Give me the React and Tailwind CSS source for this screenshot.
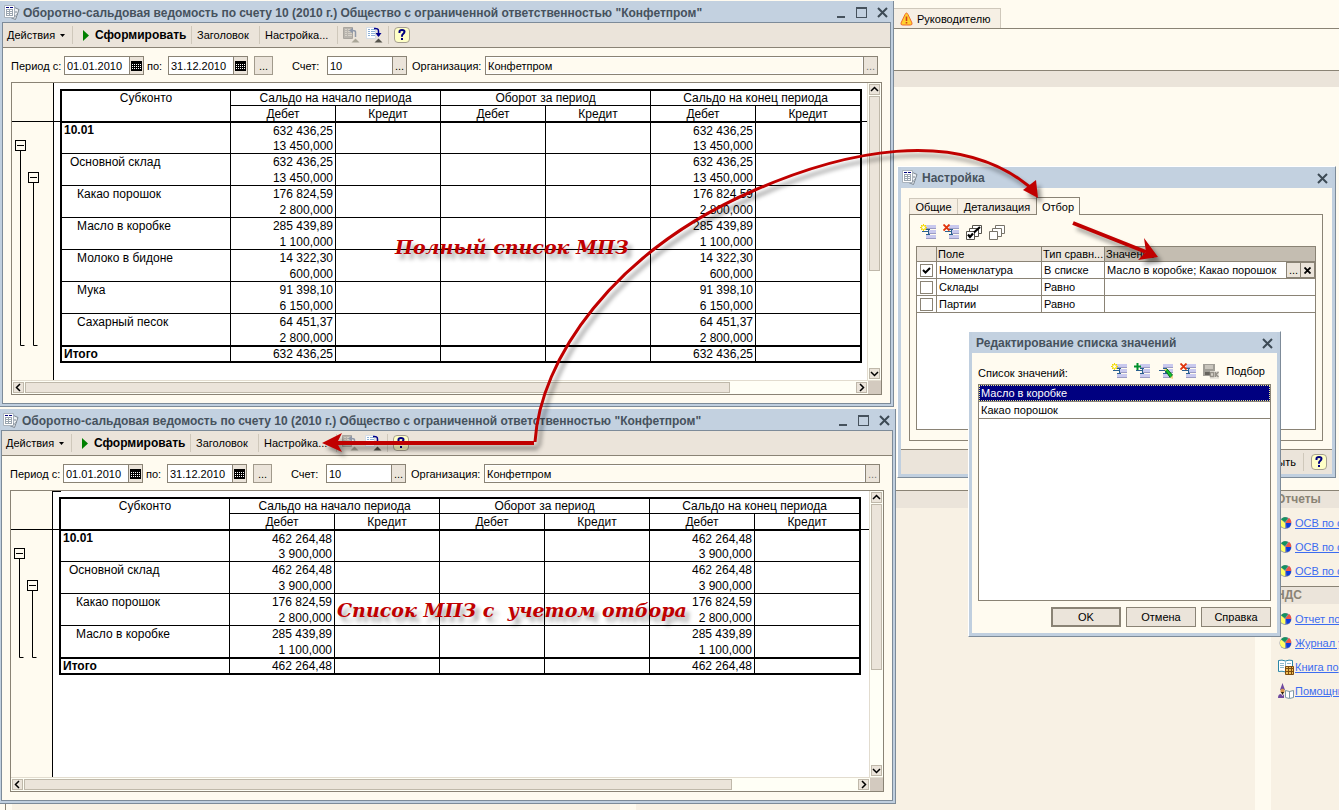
import { useId } from 'react';

const TITLE = 'Оборотно-сальдовая ведомость по счету 10 (2010 г.) Общество с ограниченной ответственностью "Конфетпром"';

const fullReport = {
  rows: [
    { name: '10.01', level: 0, sum: '632 436,25', qty: '13 450,000' },
    { name: 'Основной склад', level: 1, sum: '632 436,25', qty: '13 450,000' },
    { name: 'Какао порошок', level: 2, sum: '176 824,59', qty: '2 800,000' },
    { name: 'Масло в коробке', level: 2, sum: '285 439,89', qty: '1 100,000' },
    { name: 'Молоко в бидоне', level: 2, sum: '14 322,30', qty: '600,000' },
    { name: 'Мука', level: 2, sum: '91 398,10', qty: '6 150,000' },
    { name: 'Сахарный песок', level: 2, sum: '64 451,37', qty: '2 800,000' },
  ],
  total: '632 436,25',
  thumbV: 175,
  thumbH: 705,
};

const filteredReport = {
  rows: [
    { name: '10.01', level: 0, sum: '462 264,48', qty: '3 900,000' },
    { name: 'Основной склад', level: 1, sum: '462 264,48', qty: '3 900,000' },
    { name: 'Какао порошок', level: 2, sum: '176 824,59', qty: '2 800,000' },
    { name: 'Масло в коробке', level: 2, sum: '285 439,89', qty: '1 100,000' },
  ],
  total: '462 264,48',
  thumbV: 166,
  thumbH: 708,
  cellCursor: true,
};

const filters = [
  { field: 'Номенклатура', type: 'В списке', value: 'Масло в коробке; Какао порошок', on: true },
  { field: 'Склады', type: 'Равно', value: '', on: false },
  { field: 'Партии', type: 'Равно', value: '', on: false },
];

const linkGroups = [
  {
    title: 'Отчеты',
    links: [
      { text: 'ОСВ по с', icon: 'pie' },
      { text: 'ОСВ по с', icon: 'pie' },
      { text: 'ОСВ по с', icon: 'pie' },
    ],
  },
  {
    title: 'НДС',
    links: [
      { text: 'Отчет по', icon: 'pie' },
      { text: 'Журнал у', icon: 'pie' },
      { text: 'Книга по', icon: 'book' },
      { text: 'Помощни', icon: 'wizard' },
    ],
  },
];

const indent = ['pl-[2px]', 'pl-[8px]', 'pl-[15px]'];

/* ---------- icons ---------- */

function PagesIcon() {
  return (
    <svg width="16" height="16" viewBox="0 0 16 16" className="shrink-0">
      <path d="M10.500 2.500l4.500 2-3.500 10-5-2z" fill="#eef1f4" stroke="#7d8791" />
      <path d="M0.500 0.500h10v12h-10z" fill="#fff" stroke="#a9b3bd" />
      <path d="M2 2.500h3M6 2.500h3" stroke="#00007c" />
      <path d="M2 4.500h7M2 6.500h7M2 8.500h7M2 10.500h7M2.500 4v7M5.500 4v7M8.500 4v7" stroke="#9ba6b0" />
      <path d="M12 6v2M13 9v1M11 10v2" stroke="#7d8791" />
    </svg>
  );
}

function HelpIcon() {
  return (
    <svg width="16" height="16" viewBox="0 0 16 16">
      <rect x="0.500" y="0.500" width="15" height="15" rx="3.500" fill="#ffffc6" stroke="#a59e90" />
      <path d="M5.500 6V4.500q0-1.500 2.500-1.500t2.500 1.800q0 1.200-1.300 2T8 9.200v.6" fill="none" stroke="#000080" strokeWidth="2" />
      <rect x="7" y="11" width="2" height="2" fill="#000080" />
    </svg>
  );
}

function SheetArrowIcon({ up }) {
  return (
    <svg width="17" height="16" viewBox="0 0 17 16">
      <path d="M0.500 0.500h9v11h-9z" fill={up ? '#b9b5ae' : '#fff'} stroke={up ? '#aaa69f' : '#d5dde6'} />
      <path d="M2 2.500h2M2 4.500h2M2 6.500h2M2 8.500h2M5 2.500h4M5 4.500h4M5 6.500h4M5 8.500h4" stroke={up ? '#d6d1c8' : '#8eb1d6'} />
      {up ? (
        <>
          <path d="M12.500 10V5q0-1.500-3-1.500" fill="none" stroke="#8f98a8" strokeWidth="1.500" />
          <path d="M10 0.500v6L6 3.500z" fill="#8f98a8" />
        </>
      ) : (
        <>
          <path d="M8 1.500q4.500-.5 4.500 2.500v5" fill="none" stroke="#00008c" strokeWidth="1.500" />
          <path d="M9.500 6h6l-3 4z" fill="#00008c" />
        </>
      )}
      <path d="M12.500 11.500l4 4h-8z" fill={up ? '#aaa697' : '#55534b'} />
    </svg>
  );
}

function CalendarIcon() {
  return (
    <svg width="11" height="10" viewBox="0 0 11 10">
      <path d="M0 0h11v10H0z" fill="#000" />
      <path d="M1.500 3v6M3.500 3v6M5.500 3v6M7.500 3v6M9.500 3v6" stroke="#fff" strokeDasharray="1 1" />
    </svg>
  );
}

function RowsIcon({ kind }) {
  return (
    <svg width="16" height="16" viewBox="0 0 16 16">
      <path d="M6 1h10v4H6zM9 6h7v4H9zM6 11h10v4H6z" fill="#c9c9ee" />
      <path d="M6 4.500h10M9 9.500h7M6 14.500h10" stroke="#9c9cc4" />
      <path d="M2 7.500h7M8.500 5v5M6 5.500h4M6 10.500h4" stroke="#2a6090" />
      {kind === 'new' && (
        <>
          <circle cx="3.500" cy="3.500" r="2" fill="#fffbe0" stroke="#f2d800" />
          <path d="M3.500 0v1.500M3.500 5.500V7M0 3.500h1.500M5.500 3.500H7M1 1l1 1M6 1L5 2M1 6l1-1M6 6L5 5" stroke="#f2d800" />
        </>
      )}
      {kind === 'add' && <path d="M0 3.500h7M3.500 0v7" stroke="#00902c" strokeWidth="2" />}
      {kind === 'delete' && <path d="M0.500 0.500l6 6M6.500 0.500l-6 6" stroke="#e0330c" strokeWidth="1.800" />}
      {kind === 'edit' && (
        <>
          <path d="M8 7l2-1 5.500 6-2 3z" fill="#12c22e" stroke="#066a14" />
          <path d="M13 15l3-3v4z" fill="#f3d58b" />
          <path d="M7 6l1.500 2L10 6z" fill="#f5e070" />
        </>
      )}
    </svg>
  );
}

function StackIcon({ checked }) {
  return (
    <svg width="16" height="16" viewBox="0 0 16 16">
      <g fill="#fff" stroke={checked ? '#55524b' : '#77736a'}>
        <path d="M6.500 1.500h9v8h-9z" />
        <path d="M3.500 4.500h9v8h-9z" />
        <path d="M0.500 7.500h8v8h-8z" />
      </g>
      {checked && <path d="M2 10.500l2 2.500 3-3.500M8 8.500L14 3" fill="none" stroke="#000" strokeWidth="2.200" />}
    </svg>
  );
}

function SaveOkIcon() {
  return (
    <svg width="16" height="16" viewBox="0 0 16 16">
      <path d="M0 1h12v12H0z" fill="#a19e97" />
      <path d="M2 2h8v4H2z" fill="#c9c5bd" />
      <path d="M2 9h5v3H2z" fill="#66635d" />
      <path d="M7 8h9v8H7z" fill="#e9e5dc" />
      <path d="M7.500 9.500h3v4h-3zM12.500 9v5M15.500 9l-2.500 2.500 2.500 2.500" fill="none" stroke="#96928a" strokeWidth="1.500" />
    </svg>
  );
}

function WarningIcon() {
  return (
    <svg width="13" height="14" viewBox="0 0 13 14">
      <path d="M6.500 1Q7.300 1 8 2.500l4 8.500q.5 2-1.500 2h-8Q.5 13 1 11l4-8.500Q5.700 1 6.500 1z" fill="#ffd02e" stroke="#f0692b" />
      <path d="M5.700 4.500h1.600V9H5.700zM5.700 10h1.600v1.500H5.700z" fill="#d0401c" />
    </svg>
  );
}

function LinkIcon({ name }) {
  if (name === 'book') {
    return (
      <svg width="16" height="16" viewBox="0 0 16 16" className="shrink-0">
        <path d="M0.500 1.500q3.500-1 7 .5 3.500-1.500 7-.5v11q-3.500-.8-7 .5-3.500-1.300-7-.5z" fill="#fff" stroke="#2b87a8" />
        <path d="M7.500 2v11M2 4.500h4M2 6.500h4M2 8.500h4M9 4.500h4" stroke="#8fb9cc" />
        <path d="M7.500 7.500h8v8h-8z" fill="#f0bf55" stroke="#7c4b10" />
        <path d="M8 9.500h7M8 12.500h7M10.500 8v7M13.500 8v7" stroke="#7c4b10" />
      </svg>
    );
  }
  if (name === 'wizard') {
    return (
      <svg width="16" height="16" viewBox="0 0 16 16" className="shrink-0">
        <path d="M4.500 0L7 7H2z" fill="#6f4aa0" />
        <circle cx="4.500" cy="8" r="2.200" fill="#d99a4b" />
        <path d="M3 9h3l-1.500 3z" fill="#2b1c10" />
        <path d="M0 15q0-4 3-4l1.500 2 1.500-2v4z" fill="#6f4aa0" />
        <path d="M7.500 7.500l4 1 4-1v7l-4 1-4-1zM11.500 8v7" fill="#fff" stroke="#7d97a5" />
      </svg>
    );
  }
  return (
    <svg width="16" height="14" viewBox="0 0 16 14" className="shrink-0">
      <circle cx="7.500" cy="7" r="6" fill="#8c93a8" />
      <path d="M7 6L3 3.500A5.200 5.200 0 0 1 10 2z" fill="#14925e" />
      <path d="M8 6l3-4a5 5 0 0 1 2 5H8z" fill="#f05545" />
      <path d="M8 7h5a5 5 0 0 1-4.500 5z" fill="#0a3be0" />
      <path d="M7 7L3 3.500A5.200 5.200 0 0 0 7 12z" fill="#ffff66" />
    </svg>
  );
}

function CrossIcon() {
  return (
    <svg width="11" height="11" viewBox="0 0 11 11">
      <path d="M1 1l9 9M10 1l-9 9" stroke="#3d4a55" strokeWidth="2" />
    </svg>
  );
}

/* ---------- report window ---------- */

function Separator() {
  return <span className="h-[18px] w-px shrink-0 bg-[#cfc8bb]" />;
}

function PickField({ label, labelClass, value, fieldClass, children, muted }) {
  const id = useId();
  return (
    <>
      <label htmlFor={id} className={`shrink-0 whitespace-nowrap ${labelClass}`}>{label}</label>
      <div className={`flex h-[19px] border border-[#8a8375] ${fieldClass}`}>
        <input
          id={id}
          defaultValue={value}
          className={`min-w-0 flex-1 outline-none ${muted ? 'border border-white bg-[#fffbf0] px-px' : 'bg-white px-[2px]'}`}
        />
        <button
          type="button"
          aria-label="Выбрать"
          className={`flex w-[14px] shrink-0 items-center justify-center border-l border-[#8a8375] bg-[#ebe4da] ${muted ? 'text-[#777]' : ''}`}
        >
          {children}
        </button>
      </div>
    </>
  );
}

function ScrollButton({ d, label }) {
  return (
    <button aria-label={label} className="flex size-[11px] shrink-0 items-center justify-center border border-[#bfb8aa] bg-[#ebe4da]">
      <svg width="9" height="9" viewBox="0 0 9 9" className="shrink-0">
        <path d={d} fill="none" stroke="#000" strokeWidth="1.500" />
      </svg>
    </button>
  );
}

function Outline({ count }) {
  const end = 39 + count * 32;
  return (
    <svg width="41" height={end + 2} viewBox={`0 0 41 ${end + 2}`} fill="none" stroke="#000" className="-mt-[39px]">
      <path d={`M8.500 67v${end - 67 - 0.5}h4M21.500 99v${end - 99 - 0.5}h4`} />
      <rect x="3.500" y="57.500" width="10" height="10" fill="#fffbf0" />
      <rect x="16.500" y="89.500" width="10" height="10" fill="#fffbf0" />
      <path d="M5 62.500h7M18 94.500h7" />
    </svg>
  );
}

function ReportTable({ report }) {
  const last = report.rows.length - 1;
  return (
    <table className="relative w-[802px] table-fixed border-separate border-spacing-0 border-2 border-black bg-white text-[12px] leading-[14px]">
      <colgroup>
        <col className="w-[169px]" />
        <col className="w-[105px]" />
        <col className="w-[105px]" />
        <col className="w-[105px]" />
        <col className="w-[105px]" />
        <col className="w-[105px]" />
        <col className="w-[104px]" />
      </colgroup>
      <thead>
        <tr className="h-[15px] *:p-0 *:font-normal">
          <th rowSpan={2} className="border-r border-b-2 border-black align-top">Субконто</th>
          <th colSpan={2} className="border-r border-b border-black">Сальдо на начало периода</th>
          <th colSpan={2} className="border-r border-b border-black">Оборот за период</th>
          <th colSpan={2} className="border-b border-black">Сальдо на конец периода</th>
        </tr>
        <tr className="h-[17px] *:border-r *:border-b-2 *:border-black *:p-0 *:font-normal">
          <th>Дебет</th>
          <th>Кредит</th>
          <th>Дебет</th>
          <th>Кредит</th>
          <th>Дебет</th>
          <th className="border-r-0!">Кредит</th>
        </tr>
      </thead>
      {report.rows.map((row, i) => {
        const line = i === last ? 'border-b-2' : 'border-b';
        return (
          <tbody key={row.name}>
            <tr className={`${i === 0 ? 'h-[15px]' : 'h-4'} *:border-r *:border-black *:pb-0`}>
              <td
                rowSpan={2}
                className={`align-top ${line} ${indent[row.level]} ${row.level === 0 ? 'pt-0 font-bold' : 'pt-px'}`}
              >
                {row.name}
              </td>
              <td className="pt-0 pr-[2px] text-right">{row.sum}</td>
              <td />
              <td />
              <td />
              <td className="pt-0 pr-[2px] text-right">{row.sum}</td>
              <td className="border-r-0!" />
            </tr>
            <tr className={`${i === last ? 'h-[17px] *:border-b-2' : 'h-4 *:border-b'} *:border-r *:border-black *:py-0`}>
              <td className="pr-[2px] text-right">{row.qty}</td>
              <td />
              <td />
              <td />
              <td className="pr-[2px] text-right">{row.qty}</td>
              <td className="border-r-0!" />
            </tr>
          </tbody>
        );
      })}
      <tfoot>
        <tr className="h-[14px] *:border-r *:border-black *:py-0">
          <td className="pl-[2px] font-bold">Итого</td>
          <td className="pr-[2px] text-right">{report.total}</td>
          <td />
          <td />
          <td />
          <td className="pr-[2px] text-right">{report.total}</td>
          <td className="border-r-0!" />
        </tr>
      </tfoot>
    </table>
  );
}

function ReportWindow({ report, className }) {
  return (
    <section className={`absolute flex flex-col border-r border-b border-[#7d8b99] bg-[#c0cfdf] pr-[2px] pb-[2px] pl-[2px] ${className}`}>
      <header className="flex h-[21px] shrink-0 items-center bg-[#c3d1e0] pt-[2px] pr-[3px] pl-[2px]">
        <PagesIcon />
        <h2 className="ml-[3px] flex-1 whitespace-nowrap text-[12px] font-bold text-[#46525d]">{TITLE}</h2>
        <div className="flex items-center gap-[10px]">
          <button aria-label="Свернуть" className="flex h-[11px] w-[9px] items-end">
            <span className="h-[2px] w-2 bg-[#46525d]" />
          </button>
          <button aria-label="Развернуть" className="h-[11px] w-[11px] border border-t-2 border-[#46525d]" />
          <button aria-label="Закрыть"><CrossIcon /></button>
        </div>
      </header>

      <div className="flex min-h-0 flex-1 flex-col border border-[#7d8b99] bg-[#fffbf0]">
        {/* Toolbar */}
        <div className="flex h-[25px] shrink-0 items-center border-b border-[#8a8375] bg-[#ebe4da] whitespace-nowrap">
          <button className="flex w-[69px] items-center gap-[5px] pl-1">
            Действия
            <svg width="5" height="3" viewBox="0 0 5 3"><path d="M0 0h5L2.500 3z" /></svg>
          </button>
          <Separator />
          <button className="flex w-[118px] items-center gap-[6px] pl-[10px] text-[12px] font-bold">
            <svg width="6" height="11" viewBox="0 0 6 11"><path d="M0 0l6 5.500L0 11z" fill="#008000" /></svg>
            Сформировать
          </button>
          <Separator />
          <button className="w-[67px] pl-[5px] text-left">Заголовок</button>
          <Separator />
          <button className="w-[77px] pl-[5px] text-left">Настройка...</button>
          <Separator />
          <button aria-label="Свернуть группы" className="ml-[5px] w-[23px]"><SheetArrowIcon up /></button>
          <button aria-label="Развернуть группы" className="w-[22px]"><SheetArrowIcon /></button>
          <Separator />
          <button aria-label="Справка" className="ml-[5px]"><HelpIcon /></button>
        </div>

        {/* Report parameters */}
        <form className="flex h-[34px] shrink-0 items-center pt-px pr-[12px] pl-2">
          <PickField label="Период с:" labelClass="w-[53px]" value="01.01.2010" fieldClass="w-[80px] shrink-0">
            <CalendarIcon />
          </PickField>
          <PickField label="по:" labelClass="w-[24px] pl-[3px]" value="31.12.2010" fieldClass="w-[80px] shrink-0">
            <CalendarIcon />
          </PickField>
          <button type="button" className="ml-[6px] h-[19px] w-[19px] shrink-0 border border-[#a19a8c] bg-[#ebe4da] leading-[12px]">...</button>
          <PickField label="Счет:" labelClass="ml-[19px] w-[35px]" value="10" fieldClass="w-[80px] shrink-0">...</PickField>
          <PickField label="Организация:" labelClass="w-[78px] pl-[5px]" value="Конфетпром" fieldClass="flex-1" muted>...</PickField>
        </form>

        {/* Sheet */}
        <div className="mr-[8px] mb-[8px] ml-2 flex min-h-0 flex-1 flex-col border border-[#8a8375] bg-white">
          <div className="flex min-h-0 flex-1">
            <div className="w-[42px] shrink-0 overflow-hidden border-r border-black bg-[#fffbf0]">
              <div className="h-[39px] border-b border-black" />
              <Outline count={report.rows.length} />
            </div>
            <div className="relative min-w-0 flex-1 overflow-hidden pt-[6px] pl-[6px]">
              <div className="absolute inset-x-0 top-0 h-[39px] border-b border-black" />
              {report.cellCursor && <div className="absolute top-0 left-0 h-px w-[8px] bg-black" />}
              <ReportTable report={report} />
            </div>
            <div className="flex w-[14px] shrink-0 flex-col items-center gap-px border-l border-[#e2dccf] bg-[#fffff6] py-px">
              <ScrollButton label="Вверх" d="M1 6l3.500-3.500L8 6" />
              <div className="w-[11px] border border-[#bfb8aa] bg-[#ebe4da]" style={{ height: report.thumbV }} />
              <div className="flex-1" />
              <ScrollButton label="Вниз" d="M1 3l3.500 3.500L8 3" />
            </div>
          </div>
          <div className="flex h-[14px] shrink-0 border-t border-[#e2dccf] bg-[#fffff6]">
            <div className="flex flex-1 items-center gap-px px-px">
              <ScrollButton label="Влево" d="M6 1L2.500 4.500 6 8" />
              <div className="h-[11px] border border-[#bfb8aa] bg-[#ebe4da]" style={{ width: report.thumbH }} />
              <div className="flex-1" />
              <ScrollButton label="Вправо" d="M3 1l3.500 3.500L3 8" />
            </div>
            <div className="w-[13px] bg-[#d3cabf]" />
          </div>
        </div>
      </div>
    </section>
  );
}

/* ---------- dialogs ---------- */

function Dialog({ title, icon, className, children }) {
  return (
    <section className={`absolute flex flex-col border-t border-l border-r border-b border-t-white border-l-white border-r-[#7d8b99] border-b-[#7d8b99] bg-[#c0cfdf] px-[3px] pb-[3px] ${className}`}>
      <header className="flex h-[21px] shrink-0 items-center gap-[4px] bg-[#c3d1e0] pt-px pr-[4px] pl-[1px]">
        {icon}
        <h2 className={`flex-1 text-[12px] font-bold text-[#46525d] ${icon ? '' : 'pl-[3px]'}`}>{title}</h2>
        <button aria-label="Закрыть"><CrossIcon /></button>
      </header>
      <div className="flex min-h-0 flex-1 flex-col bg-[#fffbf0]">{children}</div>
    </section>
  );
}

function SettingsDialog() {
  return (
    <Dialog title="Настройка" icon={<PagesIcon />} className="top-[166px] left-[897px] h-[312px] w-[439px]">
      <div className="mt-[9px] ml-2 flex h-[17px] items-end">
        <button className="h-4 w-[48px] border-t border-l border-[#cfc8bb] bg-[#f6efe4]">Общие</button>
        <button className="h-4 w-[79px] border-t border-l border-[#cfc8bb] bg-[#f6efe4]">Детализация</button>
        <button className="relative -mb-px h-[18px] w-[44px] border border-b-0 border-[#8a8375] bg-[#fffbf0]">Отбор</button>
      </div>
      <div className="mr-[9px] ml-2 flex min-h-0 flex-1 flex-col border border-[#8a8375] px-[6px] pb-[10px]">
        <div className="flex h-[31px] shrink-0 items-center gap-[7px] pt-[3px] pl-[4px]">
          <button aria-label="Добавить"><RowsIcon kind="new" /></button>
          <button aria-label="Удалить"><RowsIcon kind="delete" /></button>
          <button aria-label="Включить все"><StackIcon checked /></button>
          <button aria-label="Выключить все"><StackIcon /></button>
        </div>
        <div className="flex-1 border border-[#8a8375] bg-white">
          <table className="w-full table-fixed border-separate border-spacing-0 text-left leading-[14px]">
            <thead>
              <tr className="h-[15px] *:border-r *:border-b *:border-[#8a8375] *:bg-[#ebe4da] *:py-0 *:pl-[1px] *:font-normal">
                <th className="w-5" />
                <th className="w-[105px]">Поле</th>
                <th className="w-[63px] overflow-hidden pr-0 whitespace-nowrap">Тип сравн...</th>
                <th className="border-r-0! bg-[#c4bdb1]!">Значение</th>
              </tr>
            </thead>
            <tbody>
              {filters.map((f) => (
                <tr key={f.field} className="h-[17px] *:border-r *:border-b *:border-[#8a8375] *:p-0">
                  <td>
                    <span className="relative mx-auto block size-[13px]">
                      <input
                        type="checkbox"
                        defaultChecked={f.on}
                        aria-label={f.field}
                        className="peer block size-[13px] appearance-none border border-[#8a8375] bg-white"
                      />
                      <svg viewBox="0 0 13 13" className="pointer-events-none absolute inset-0 hidden peer-checked:block">
                        <path d="M3 6l2.500 2.500L10 4" fill="none" stroke="#000" strokeWidth="2" />
                      </svg>
                    </span>
                  </td>
                  <td><span className="pl-[2px]">{f.field}</span></td>
                  <td><span className="pl-[2px]">{f.type}</span></td>
                  <td className="border-r-0!">
                    {f.on && (
                      <div className="flex h-4 items-center">
                        <span className="flex-1 pl-[2px] whitespace-nowrap">{f.value}</span>
                        <button aria-label="Выбрать" className="h-4 w-[15px] border border-[#8a8375] bg-[#ebe4da] leading-[10px]">...</button>
                        <button aria-label="Очистить" className="flex h-4 w-[14px] items-center justify-center border border-l-0 border-[#8a8375] bg-[#ebe4da]">
                          <svg width="7" height="7" viewBox="0 0 7 7"><path d="M0.500 0.500l6 6M6.500 0.500l-6 6" stroke="#000" strokeWidth="1.800" /></svg>
                        </button>
                      </div>
                    )}
                  </td>
                </tr>
              ))}
            </tbody>
          </table>
        </div>
      </div>
      <footer className="mt-2 flex h-[25px] shrink-0 items-center justify-end gap-[7px] border-t border-[#8a8375] bg-[#ebe4da] pr-[5px]">
        <button>Закрыть</button>
        <Separator />
        <button aria-label="Справка"><HelpIcon /></button>
      </footer>
    </Dialog>
  );
}

function ValueListDialog() {
  return (
    <Dialog title="Редактирование списка значений" className="top-[331px] left-[968px] h-[306px] w-[313px]">
      <div className="flex h-[30px] shrink-0 items-center gap-[7px] pt-[6px] pr-[12px] pl-[6px]">
        <span className="flex-1 pt-[4px]">Список значений:</span>
        <button aria-label="Добавить"><RowsIcon kind="new" /></button>
        <button aria-label="Вставить"><RowsIcon kind="add" /></button>
        <button aria-label="Изменить"><RowsIcon kind="edit" /></button>
        <button aria-label="Удалить"><RowsIcon kind="delete" /></button>
        <button aria-label="Сохранить"><SaveOkIcon /></button>
        <button>Подбор</button>
      </div>
      <ul className="mx-[6px] mt-px flex-1 border border-[#8a8375] bg-white leading-[14px]">
        <li className="flex h-[17px] items-center border-b border-[#8a8375] bg-[#000080] text-white">
          <span className="h-full flex-1 border border-dotted border-[#e8e890] pl-px">Масло в коробке</span>
        </li>
        <li className="flex h-[17px] items-center border-b border-[#8a8375] pl-[2px]">Какао порошок</li>
      </ul>
      <div className="flex shrink-0 justify-end gap-[5px] px-[6px] py-[6px]">
        <button className="h-5 w-[70px] border-2 border-[#8a8375] bg-[#ebe4da]">OK</button>
        <button className="h-5 w-[70px] border border-[#8a8375] bg-[#ebe4da]">Отмена</button>
        <button className="h-5 w-[70px] border border-[#8a8375] bg-[#ebe4da]">Справка</button>
      </div>
    </Dialog>
  );
}

/* ---------- desktop ---------- */

function Desktop() {
  return (
    <div className="flex h-full flex-col">
      <div className="flex h-[29px] items-end border-b border-[#8a8375] pl-[894px]">
        <button className="flex h-5 w-[107px] items-center gap-[4px] border-t border-r border-[#cfc8bb] bg-[#f6efe4] pl-[6px]">
          <WarningIcon />
          Руководителю
        </button>
      </div>
      <div className="h-[41px]" />
      <div className="h-[17px] border-t border-[#8a8375] bg-[#ebe4da]" />
      <div className="h-[403px]" />
      <div className="flex flex-1 gap-4">
        <div className="ml-[5px] flex w-[615px] border-l border-[#8a8375] pl-[6px]">
          <div className="flex-1 bg-[#f8f1e4]" />
        </div>
        <div className="w-[619px] bg-[#f8f1e4]">
          <div className="h-[18px] border-t border-[#8a8375] bg-[#ebe4da]" />
        </div>
        <nav className="min-w-0 flex-1 overflow-hidden bg-[#f8f1e4]">
          {linkGroups.map((group) => (
            <div key={group.title} className="pb-[3px]">
              <h3 className="h-[18px] border-t border-[#8a8375] bg-[#ebe4da] pl-[5px] text-[12px] leading-[17px] font-bold text-[#8a8375]">
                {group.title}
              </h3>
              <ul className="pt-[3px]">
                {group.links.map((link, i) => (
                  <li key={i} className="flex h-6 items-center pl-[7px] whitespace-nowrap">
                    <LinkIcon name={link.icon} />
                    <a href="#" className="ml-px text-[#3c6cf0] underline">{link.text}</a>
                  </li>
                ))}
              </ul>
            </div>
          ))}
        </nav>
      </div>
    </div>
  );
}

function Annotations() {
  return (
    <div className="pointer-events-none absolute inset-0">
      <p className="absolute top-[235px] left-[395px] font-['DejaVu_Serif',serif] text-[19px] leading-6 font-bold whitespace-nowrap text-[#c00000] italic [text-shadow:4px_5px_4px_#00000055]">
        Полный список МПЗ
      </p>
      <p className="absolute top-[598px] left-[337px] font-['DejaVu_Serif',serif] text-[19px] leading-6 font-bold whitespace-pre text-[#c00000] italic [text-shadow:4px_5px_4px_#00000055]">
        {'Список МПЗ с  учетом отбора'}
      </p>
      <svg width="1339" height="810" viewBox="0 0 1339 810" className="absolute top-0 left-0 [filter:drop-shadow(4px_5px_2px_#00000066)]">
        <path d="M336 443H534" stroke="#c00000" strokeWidth="4" />
        <path d="M535 442C540 360 612 252 755 190C840 153 955 125 1030 187" fill="none" stroke="#c00000" strokeWidth="3" />
        <path d="M322 443l20-10-5 10 5 9z" fill="#c00000" />
        <path d="M1038 198l-15-8 13-10z" fill="#c00000" />
        <path d="M1073 223L1146 252" stroke="#c00000" strokeWidth="4" />
        <path d="M1158 257l-20 3 8-8-2-14z" fill="#c00000" />
      </svg>
    </div>
  );
}

export default function App() {
  return (
    <main className="relative h-screen overflow-hidden bg-[#fffbf0] font-['Liberation_Sans',Arial,sans-serif] text-[11px] leading-[14px] text-black">
      <Desktop />
      <ReportWindow report={fullReport} className="top-px left-0 h-[406px] w-[894px]" />
      <ReportWindow report={filteredReport} className="top-[409px] -left-px h-[395px] w-[897px]" />
      <SettingsDialog />
      <ValueListDialog />
      <Annotations />
    </main>
  );
}
